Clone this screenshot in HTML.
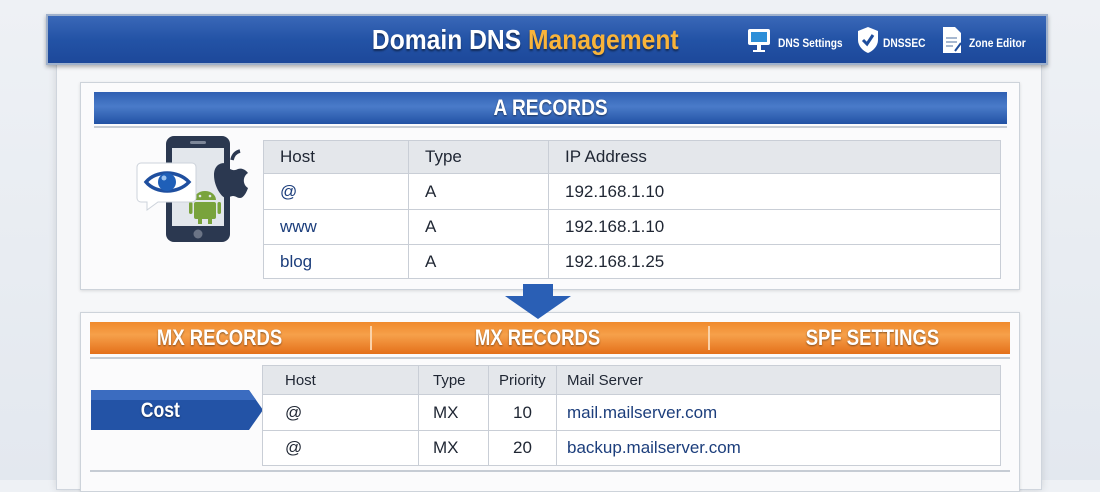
<!DOCTYPE html>
<html><head><meta charset="utf-8"><style>
*{box-sizing:border-box;margin:0;padding:0}
body{width:1100px;height:480px;overflow:hidden;background:linear-gradient(#eef1f5,#e3e8ef);font-family:"Liberation Sans",sans-serif;position:relative}
.abs{position:absolute}
.cond{font-family:"Liberation Sans",sans-serif;font-weight:bold}
.sx{display:inline-block;transform:scaleX(.84);transform-origin:center}
.panel{left:56px;top:30px;width:986px;height:460px;background:#f6f7f9;border:1px solid #cfd5dd;box-shadow:0 0 8px rgba(0,0,0,.12)}
.hdr{left:46px;top:14px;width:1002px;height:51px;background:linear-gradient(#3a68b8,#2353a6 50%,#1d489a);border:2px solid #9fb1cc;box-shadow:0 2px 4px rgba(0,0,0,.3)}
.card{background:#fbfbfc;border:1px solid #cdd3da;box-shadow:0 1px 3px rgba(0,0,0,.12)}
.bluebar{background:linear-gradient(#2f5fb2,#4a7bc9 45%,#2252a4);color:#fff;text-align:center;text-shadow:0 1px 2px rgba(0,0,0,.5)}
.orbar{background:linear-gradient(#f08a2c,#f6a04a 40%,#e4701a);color:#fff;text-shadow:0 1px 2px rgba(0,0,0,.45)}
table{border-collapse:collapse;position:absolute;background:#fff;font-size:17px;color:#1f2633}
td{border:1px solid #c9ced6;padding:0 0 0 16px}
tr.h td{background:#e4e7eb}
.b{color:#1c3e7c}
.hl{font-size:12px;color:#fff;top:20px;white-space:nowrap;transform:scaleX(.85);transform-origin:left}
</style></head><body>
<div class="abs panel"></div>
<div class="abs hdr">
 <div class="abs cond" style="left:300px;top:8px;width:355px;text-align:center;font-size:28px;color:#fff;text-shadow:0 2px 2px rgba(0,0,0,.45);white-space:nowrap"><span class="sx" style="transform:scaleX(.88)">Domain DNS <span style="color:#f9b43a">Management</span></span></div>
 <svg class="abs" style="left:699px;top:12px" width="24" height="26" viewBox="0 0 24 26"><rect x="1" y="1" width="22" height="16" rx="2" fill="#fff"/><rect x="4" y="4" width="16" height="10" fill="#2d8fd8"/><rect x="10" y="17" width="4" height="5" fill="#fff"/><rect x="6" y="22" width="12" height="2" fill="#fff"/></svg>
 <div class="abs cond hl" style="left:730px">DNS Settings</div>
 <svg class="abs" style="left:808px;top:10px" width="24" height="28" viewBox="0 0 24 28"><path d="M12 1L22 5V14C22 20 17 25 12 27C7 25 2 20 2 14V5Z" fill="#fff"/><path d="M7 14L11 18L17 9" stroke="#1f4d9c" stroke-width="3" fill="none"/></svg>
 <div class="abs cond hl" style="left:835px">DNSSEC</div>
 <svg class="abs" style="left:893px;top:10px" width="22" height="28" viewBox="0 0 22 28"><path d="M2 1H14L20 7V27H2Z" fill="#fff"/><path d="M5 12H16M5 16H16M5 20H12" stroke="#8aa0c0" stroke-width="1.5"/><path d="M14 25L20 17" stroke="#1f4d9c" stroke-width="2"/></svg>
 <div class="abs cond hl" style="left:921px">Zone Editor</div>
</div>

<div class="abs card" style="left:80px;top:82px;width:940px;height:208px"></div>
<div class="abs bluebar cond" style="left:94px;top:92px;width:913px;height:32px;font-size:22px;line-height:32px"><span class="sx" style="transform:scaleX(.87)">A RECORDS</span></div>
<div class="abs" style="left:94px;top:126px;width:913px;height:2px;background:#c6ccd4"></div>

<svg class="abs" style="left:134px;top:134px" width="115" height="112" viewBox="0 0 115 112">
 <rect x="32" y="2" width="64" height="106" rx="8" fill="#2b3850"/>
 <rect x="38" y="14" width="52" height="78" fill="#e3e7ec"/>
 <rect x="56" y="7" width="16" height="3" rx="1.5" fill="#7d8799"/>
 <circle cx="64" cy="100" r="4.5" fill="#6b7486"/>
 <path d="M98 26c1-5 4-8 8-9" stroke="#2b3850" stroke-width="3.5" fill="none"/>
 <path d="M96 31c-6-4-16-2-16 10c0 12 8 23 12 23c3 0 4-2 7-2s4 2 7 2c4 0 7-7 8-10c-5-3-6-11 0-15c-3-4-7-5-10-4c-2 1-4 2-8 0z" fill="#2b3850"/>
 <rect x="60" y="68" width="22" height="17" rx="2" fill="#79a33c"/>
 <path d="M60 66a11 9 0 0 1 22 0z" fill="#79a33c"/>
 <circle cx="66" cy="62" r="1.3" fill="#e3e7ec"/><circle cx="76" cy="62" r="1.3" fill="#e3e7ec"/>
 <rect x="55" y="68" width="3.5" height="12" rx="1.7" fill="#79a33c"/><rect x="83.5" y="68" width="3.5" height="12" rx="1.7" fill="#79a33c"/>
 <rect x="64" y="84" width="4" height="6" fill="#79a33c"/><rect x="74" y="84" width="4" height="6" fill="#79a33c"/>
 <path d="M7 29H58a4 4 0 0 1 4 4V64a4 4 0 0 1-4 4H24L13 76V68H7a4 4 0 0 1-4-4V33a4 4 0 0 1 4-4z" fill="#fff" stroke="#cdd3db"/>
 <path d="M12 48C22 36 44 36 55 48C44 60 22 60 12 48Z" fill="#fff" stroke="#1f4f9f" stroke-width="3.5"/>
 <circle cx="33" cy="48" r="9" fill="#1f5fb8"/><circle cx="30" cy="44" r="2.5" fill="#9cc2ee"/>
</svg>

<table style="left:263px;top:140px;width:738px">
 <tr class="h" style="height:33px"><td style="width:145px">Host</td><td style="width:140px">Type</td><td>IP Address</td></tr>
 <tr style="height:36px"><td class="b">@</td><td>A</td><td>192.168.1.10</td></tr>
 <tr style="height:35px"><td class="b">www</td><td>A</td><td>192.168.1.10</td></tr>
 <tr style="height:34px"><td class="b">blog</td><td>A</td><td>192.168.1.25</td></tr>
</table>

<div class="abs card" style="left:80px;top:312px;width:940px;height:180px"></div>
<svg class="abs" style="left:503px;top:284px" width="70" height="36" viewBox="0 0 70 36"><path d="M20 0H50V12H68L35 35L2 12H20Z" fill="#2a5fb5"/></svg>
<div class="abs orbar cond" style="left:90px;top:322px;width:920px;height:32px;font-size:22px;line-height:32px">
 <span class="abs" style="left:0;width:260px;text-align:center"><span class="sx">MX RECORDS</span></span>
 <span class="abs" style="left:280px;top:4px;width:2px;height:24px;background:#fbd2a8"></span>
 <span class="abs" style="left:282px;width:332px;text-align:center"><span class="sx">MX RECORDS</span></span>
 <span class="abs" style="left:618px;top:4px;width:2px;height:24px;background:#fbd2a8"></span>
 <span class="abs" style="left:620px;width:324px;text-align:center"><span class="sx">SPF SETTINGS</span></span>
</div>
<div class="abs" style="left:90px;top:357px;width:920px;height:2px;background:#c6ccd4"></div>

<svg class="abs" style="left:91px;top:390px" width="173" height="42" viewBox="0 0 173 42"><path d="M0 0H158L172 20L158 40H0Z" fill="#2353a6"/><path d="M0 0H158L165 10H0Z" fill="#3b6cc0"/></svg>
<div class="abs cond" style="left:120px;top:398px;width:80px;text-align:center;font-size:21px;line-height:26px;color:#fff;text-shadow:0 1px 2px rgba(0,0,0,.5)"><span class="sx">Cost</span></div>

<table style="left:262px;top:365px;width:739px">
 <tr class="h" style="height:29px;font-size:15px"><td style="width:156px;padding-left:22px">Host</td><td style="width:70px;padding-left:14px">Type</td><td style="width:68px;padding-left:10px">Priority</td><td style="padding-left:10px">Mail Server</td></tr>
 <tr style="height:36px"><td style="padding-left:22px">@</td><td style="padding-left:14px">MX</td><td style="text-align:center;padding:0">10</td><td class="b" style="padding-left:10px">mail.mailserver.com</td></tr>
 <tr style="height:35px"><td style="padding-left:22px">@</td><td style="padding-left:14px">MX</td><td style="text-align:center;padding:0">20</td><td class="b" style="padding-left:10px">backup.mailserver.com</td></tr>
</table>
<div class="abs" style="left:90px;top:470px;width:920px;height:2px;background:#c6ccd4"></div>
</body></html>
